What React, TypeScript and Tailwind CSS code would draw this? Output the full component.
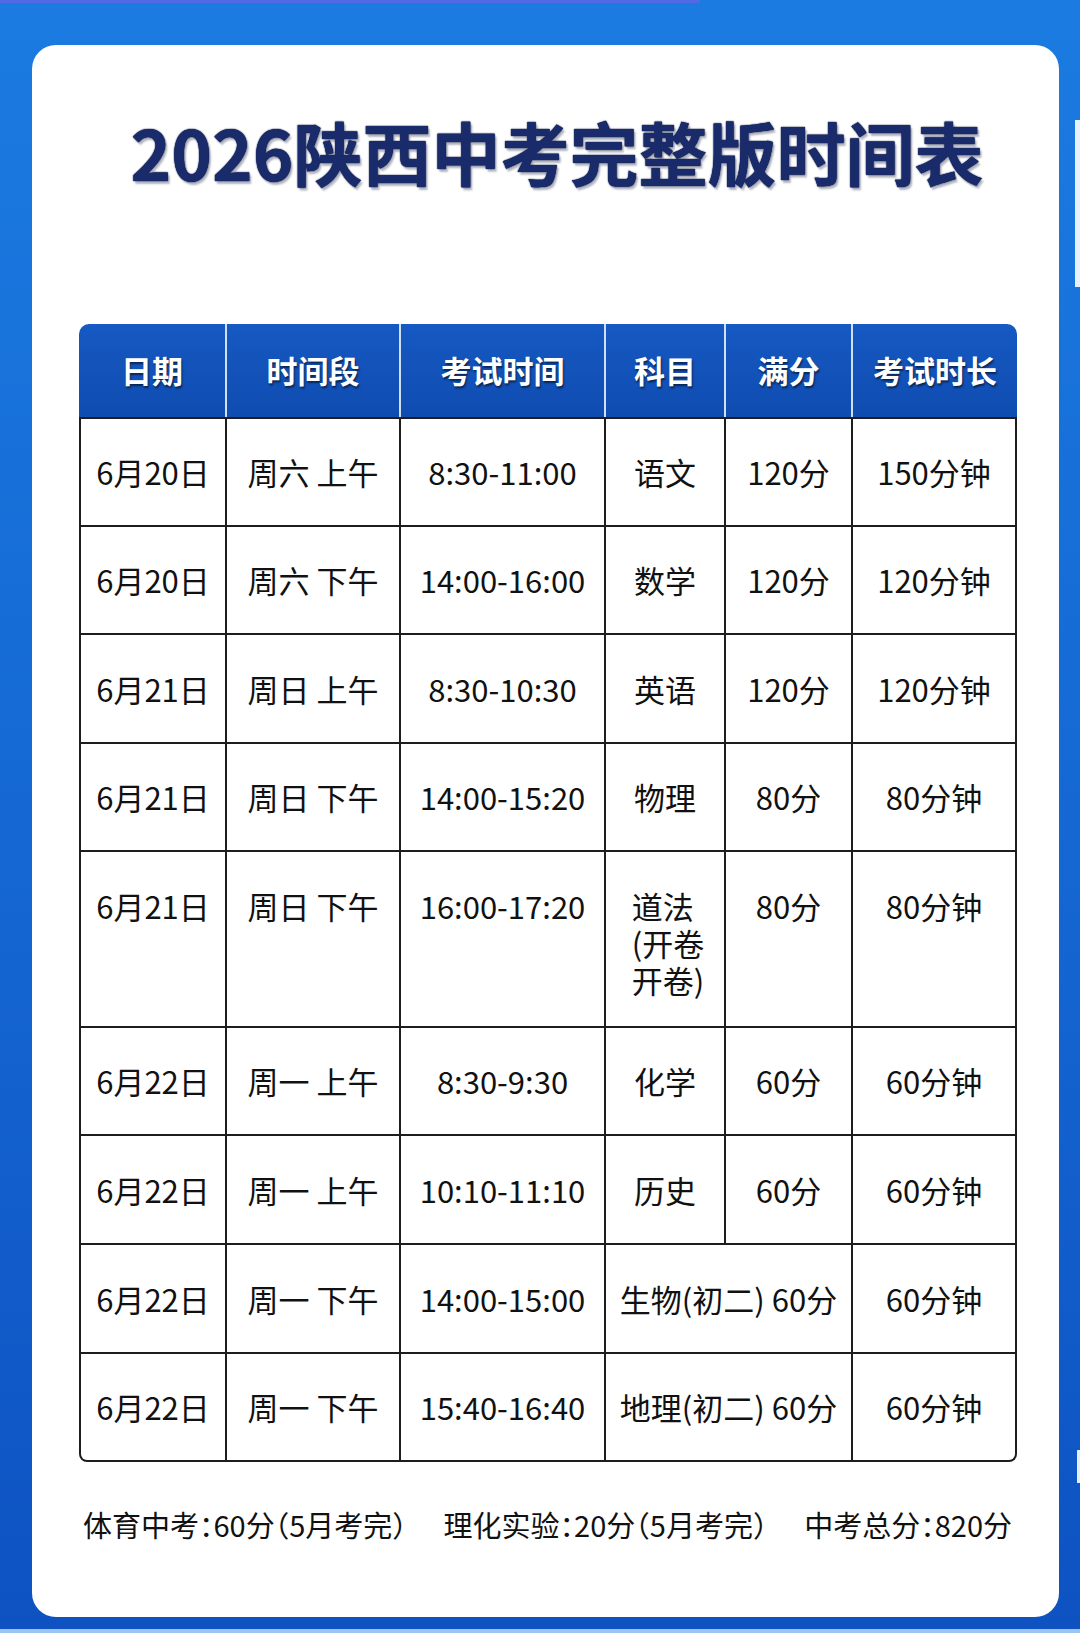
import React from "react";

type Row = { cells: (string | string[])[]; merged?: boolean; tall?: boolean; h: string };

const rows: Row[] = [
  { cells: ["6月20日", "周六 上午", "8:30-11:00", "语文", "120分", "150分钟"], h: "h-[108px]" },
  { cells: ["6月20日", "周六 下午", "14:00-16:00", "数学", "120分", "120分钟"], h: "h-[108px]" },
  { cells: ["6月21日", "周日 上午", "8:30-10:30", "英语", "120分", "120分钟"], h: "h-[109px]" },
  { cells: ["6月21日", "周日 下午", "14:00-15:20", "物理", "80分", "80分钟"], h: "h-[108px]" },
  { cells: ["6月21日", "周日 下午", "16:00-17:20", ["道法", "(开卷", "开卷)"], "80分", "80分钟"], tall: true, h: "h-[176px]" },
  { cells: ["6月22日", "周一 上午", "8:30-9:30", "化学", "60分", "60分钟"], h: "h-[108px]" },
  { cells: ["6月22日", "周一 上午", "10:10-11:10", "历史", "60分", "60分钟"], h: "h-[109px]" },
  { cells: ["6月22日", "周一 下午", "14:00-15:00", "生物(初二) 60分", "60分钟"], merged: true, h: "h-[109px]" },
  { cells: ["6月22日", "周一 下午", "15:40-16:40", "地理(初二) 60分", "60分钟"], merged: true, h: "h-[108px]" },
];

const headers = ["日期", "时间段", "考试时间", "科目", "满分", "考试时长"];
const widths = ["w-[148px]", "w-[174px]", "w-[205px]", "w-[120px]", "w-[127px]", "flex-1"];

export default function App() {
  return (
    <div
      className="relative w-[1080px] h-[1633px] overflow-hidden bg-gradient-to-b from-[#1b7be0] via-[#1568d4] to-[#0e52c2] pt-[45px] pl-[32px]"
      style={{ fontFamily: '"Noto Sans CJK SC", "Noto Sans", sans-serif' }}
    >
      <div className="absolute left-0 top-0 h-[3px] w-[700px] bg-[#6a63e6] opacity-70" />
      <div className="absolute right-0 top-[120px] h-[167px] w-[5px] bg-white opacity-90" />
      <div className="absolute right-0 top-[1450px] h-[33px] w-[3px] bg-white opacity-90" />
      <div className="absolute left-0 bottom-0 h-[4px] w-full bg-[#9cc4ee]" />

      <div className="w-[1027px] h-[1572px] bg-white rounded-[24px] pt-[70px]">
        <h1
          className="text-center pl-[23px] text-[69px] leading-[72px] font-bold text-[#1a2b6b]"
          style={{ textShadow: "0 0 1.5px #0a1540, 0 0 1px #0a1540, 2px 3px 2px rgba(10,20,60,0.3)" }}
        >
          2026陕西中考完整版时间表
        </h1>

        <div className="ml-[47px] mt-[137px] w-[938px]">
          <div className="flex h-[93px] bg-gradient-to-b from-[#1659c2] to-[#0f4cb1] rounded-t-[10px] overflow-hidden">
            {headers.map((t, i) => (
              <div
                key={t}
                className={`${widths[i]} ${i < 5 ? "border-r-2 border-[#cfe0f5]" : ""} flex items-center justify-center text-white font-bold text-[31px]`}
                style={{ textShadow: "1px 2px 2px rgba(0,0,0,0.55)" }}
              >
                {t}
              </div>
            ))}
          </div>

          <div className="border-x-2 border-b-2 border-[#1d1d1d] rounded-b-[8px] overflow-hidden text-[#111] text-[31px]">
            {rows.map((r, ri) => {
              const cols = r.merged
                ? ["w-[146px]", "w-[174px]", "w-[205px]", "w-[247px]", "flex-1"]
                : ["w-[146px]", "w-[174px]", "w-[205px]", "w-[120px]", "w-[127px]", "flex-1"];
              return (
                <div key={ri} className={`flex ${r.h}`}>
                  {r.cells.map((c, ci) => {
                    const last = ci === r.cells.length - 1;
                    return (
                      <div
                        key={ci}
                        className={`${cols[ci]} border-t-2 border-[#1d1d1d] ${last ? "" : "border-r-2"} flex justify-center ${r.tall ? "items-start pt-[35px]" : "items-center"} whitespace-nowrap`}
                      >
                        {Array.isArray(c) ? (
                          <div className="text-left pl-[6px] leading-[37px]">
                            {c.map((l) => (
                              <div key={l}>{l}</div>
                            ))}
                          </div>
                        ) : (
                          <span className="leading-[38px]">{c}</span>
                        )}
                      </div>
                    );
                  })}
                </div>
              );
            })}
          </div>
        </div>

        <div className="mt-[42px] pl-[51px] pr-[47px] flex justify-between text-[29px] leading-[40px] text-[#111] [font-feature-settings:'halt']">
          <span>体育中考：60分（5月考完）</span>
          <span>理化实验：20分（5月考完）</span>
          <span>中考总分：820分</span>
        </div>
      </div>
    </div>
  );
}
